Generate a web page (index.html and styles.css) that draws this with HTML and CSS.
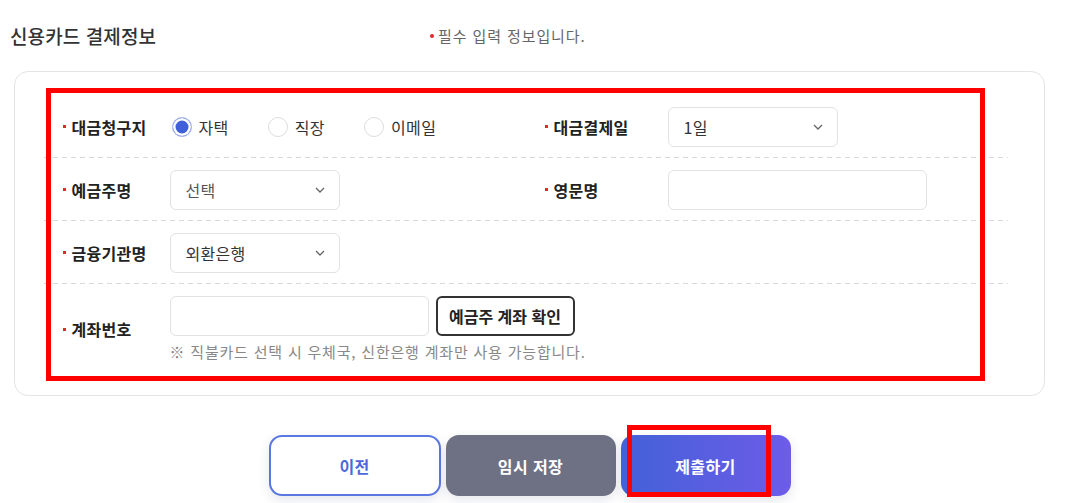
FILE: index.html
```html
<!DOCTYPE html>
<html lang="ko">
<head>
<meta charset="utf-8">
<title>신용카드 결제정보</title>
<link rel="stylesheet" href="styles.css">
</head>
<body>
<div class="page">
  <header class="head">
    <h2 class="title">신용카드 결제정보</h2>
    <p class="req"><span class="req-dot"></span>필수 입력 정보입니다.</p>
  </header>

  <section class="card">
    <div class="row">
      <span class="lbl">대금청구지</span>
      <div class="radios">
        <label class="radio"><span class="rb on"></span>자택</label>
        <label class="radio"><span class="rb"></span>직장</label>
        <label class="radio"><span class="rb"></span>이메일</label>
      </div>
      <span class="lbl">대금결제일</span>
      <div class="select"><span>1일</span><svg class="chev" width="10" height="6" viewBox="0 0 10 6"><path d="M1 1 L5 5 L9 1" fill="none" stroke="#666" stroke-width="1.3"/></svg></div>
    </div>

    <div class="row">
      <span class="lbl">예금주명</span>
      <div class="select"><span class="ph">선택</span><svg class="chev" width="10" height="6" viewBox="0 0 10 6"><path d="M1 1 L5 5 L9 1" fill="none" stroke="#666" stroke-width="1.3"/></svg></div>
      <span class="lbl">영문명</span>
      <div class="input"></div>
    </div>

    <div class="row">
      <span class="lbl">금융기관명</span>
      <div class="select"><span>외환은행</span><svg class="chev" width="10" height="6" viewBox="0 0 10 6"><path d="M1 1 L5 5 L9 1" fill="none" stroke="#666" stroke-width="1.3"/></svg></div>
    </div>

    <div class="row last">
      <span class="lbl">계좌번호</span>
      <div class="acct">
        <div class="acct-line">
          <div class="input"></div>
          <button class="btn-check" type="button">예금주 계좌 확인</button>
        </div>
        <p class="note">※ 직불카드 선택 시 우체국, 신한은행 계좌만 사용 가능합니다.</p>
      </div>
    </div>
  </section>

  <div class="actions">
    <button class="btn btn-prev" type="button">이전</button>
    <button class="btn btn-temp" type="button">임시 저장</button>
    <button class="btn btn-submit" type="button">제출하기</button>
  </div>

  <div class="mark mark-form"></div>
  <div class="mark mark-submit"></div>
</div>
</body>
</html>
```

FILE: styles.css
```css
* { box-sizing: border-box; }

body {
  margin: 0;
  background: #fff;
  color: #222;
  font-family: "Noto Sans CJK KR", "Noto Sans", sans-serif;
}

.page {
  position: relative;
  width: 1082px;
  height: 503px;
  overflow: hidden;
}

.head {
  display: flex;
  align-items: center;
  padding: 24px 0 0 10px;
}

.title {
  margin: 0;
  width: 420px;
  font-size: 19px;
  font-weight: 500;
  line-height: 24px;
  letter-spacing: 0.1px;
  color: #333;
}

.req {
  margin: 0;
  display: flex;
  align-items: center;
  font-size: 15px;
  line-height: 24px;
  letter-spacing: 0.9px;
  color: #666;
}

.req-dot {
  width: 4px;
  height: 4px;
  border-radius: 50%;
  background: #e5262a;
  margin-right: 4px;
}

.card {
  margin: 23px 0 0 14px;
  width: 1031px;
  height: 325px;
  border: 1.5px solid #e4e4e4;
  border-radius: 14px;
  padding: 23px 36px 0 28.5px;
}

.row {
  display: grid;
  grid-template-columns: 107px 375px 123px 1fr;
  align-items: center;
  height: 63px;
  padding-left: 19px;
  background: repeating-linear-gradient(90deg, #d8d8d8 0 5px, transparent 5px 9px) left bottom / 100% 1px no-repeat;
}

.row.last {
  height: auto;
  padding: 12px 0 12px 19px;
  background: none;
}

.lbl {
  display: flex;
  align-items: center;
  font-size: 16px;
  font-weight: 700;
  line-height: 20px;
  letter-spacing: 0.3px;
  color: #222;
}

.lbl::before {
  content: "";
  width: 3px;
  height: 3px;
  background: #e5262a;
  margin-right: 6px;
}

.radios {
  display: flex;
  gap: 39px;
  padding-left: 2px;
}

.radio {
  display: flex;
  align-items: center;
  gap: 7px;
  font-size: 16px;
  line-height: 20px;
  letter-spacing: 0.4px;
  color: #333;
}

.rb {
  width: 20px;
  height: 20px;
  border-radius: 50%;
  border: 1px solid #dddddd;
  background: #fff;
}

.rb.on {
  border-color: #aebbef;
  background: #3f60d9;
  box-shadow: inset 0 0 0 2.5px #fff;
}

.select {
  width: 170px;
  height: 40px;
  border: 1px solid #e2e2e2;
  border-radius: 6px;
  display: flex;
  align-items: center;
  justify-content: space-between;
  padding: 0 14px 0 15px;
  font-size: 16px;
  letter-spacing: 0.3px;
  color: #333;
}

.select .ph { color: #555; }

.chev { display: block; }

.input {
  width: 259px;
  height: 40px;
  border: 1px solid #e2e2e2;
  border-radius: 6px;
  background: #fff;
}

.acct { grid-column: 2 / -1; }

.acct-line {
  display: flex;
  gap: 7px;
}

.btn-check {
  width: 139px;
  height: 40px;
  border: 2px solid #333;
  border-radius: 6px;
  background: #fff;
  font-family: inherit;
  font-size: 16px;
  font-weight: 700;
  color: #222;
  padding: 0;
}

.note {
  margin: 6px 0 0;
  font-size: 15px;
  line-height: 20px;
  letter-spacing: 0.8px;
  color: #888;
}

.actions {
  display: flex;
  justify-content: center;
  gap: 5px;
  margin: 39px 0 0 14px;
  width: 1031px;
}

.btn {
  height: 61px;
  border-radius: 13px;
  font-family: inherit;
  font-size: 16px;
  font-weight: 700;
  letter-spacing: 0.4px;
  display: flex;
  align-items: center;
  justify-content: center;
  padding: 0;
  box-shadow: 0 4px 12px rgba(40, 50, 90, 0.12);
}

.btn-prev {
  width: 172px;
  border: 2px solid #5a76e0;
  background: #fff;
  color: #4b69d9;
}

.btn-temp {
  width: 170px;
  border: 0;
  background: #6e7084;
  color: #fff;
}

.btn-submit {
  width: 170px;
  border: 0;
  background: linear-gradient(90deg, #4361d8, #6d5ce8);
  color: #fff;
}

.mark {
  position: absolute;
  border: 5px solid #ff0000;
  pointer-events: none;
}

.mark-form {
  left: 46px;
  top: 88px;
  width: 939px;
  height: 293px;
}

.mark-submit {
  left: 627px;
  top: 425px;
  width: 144px;
  height: 72px;
}
```
